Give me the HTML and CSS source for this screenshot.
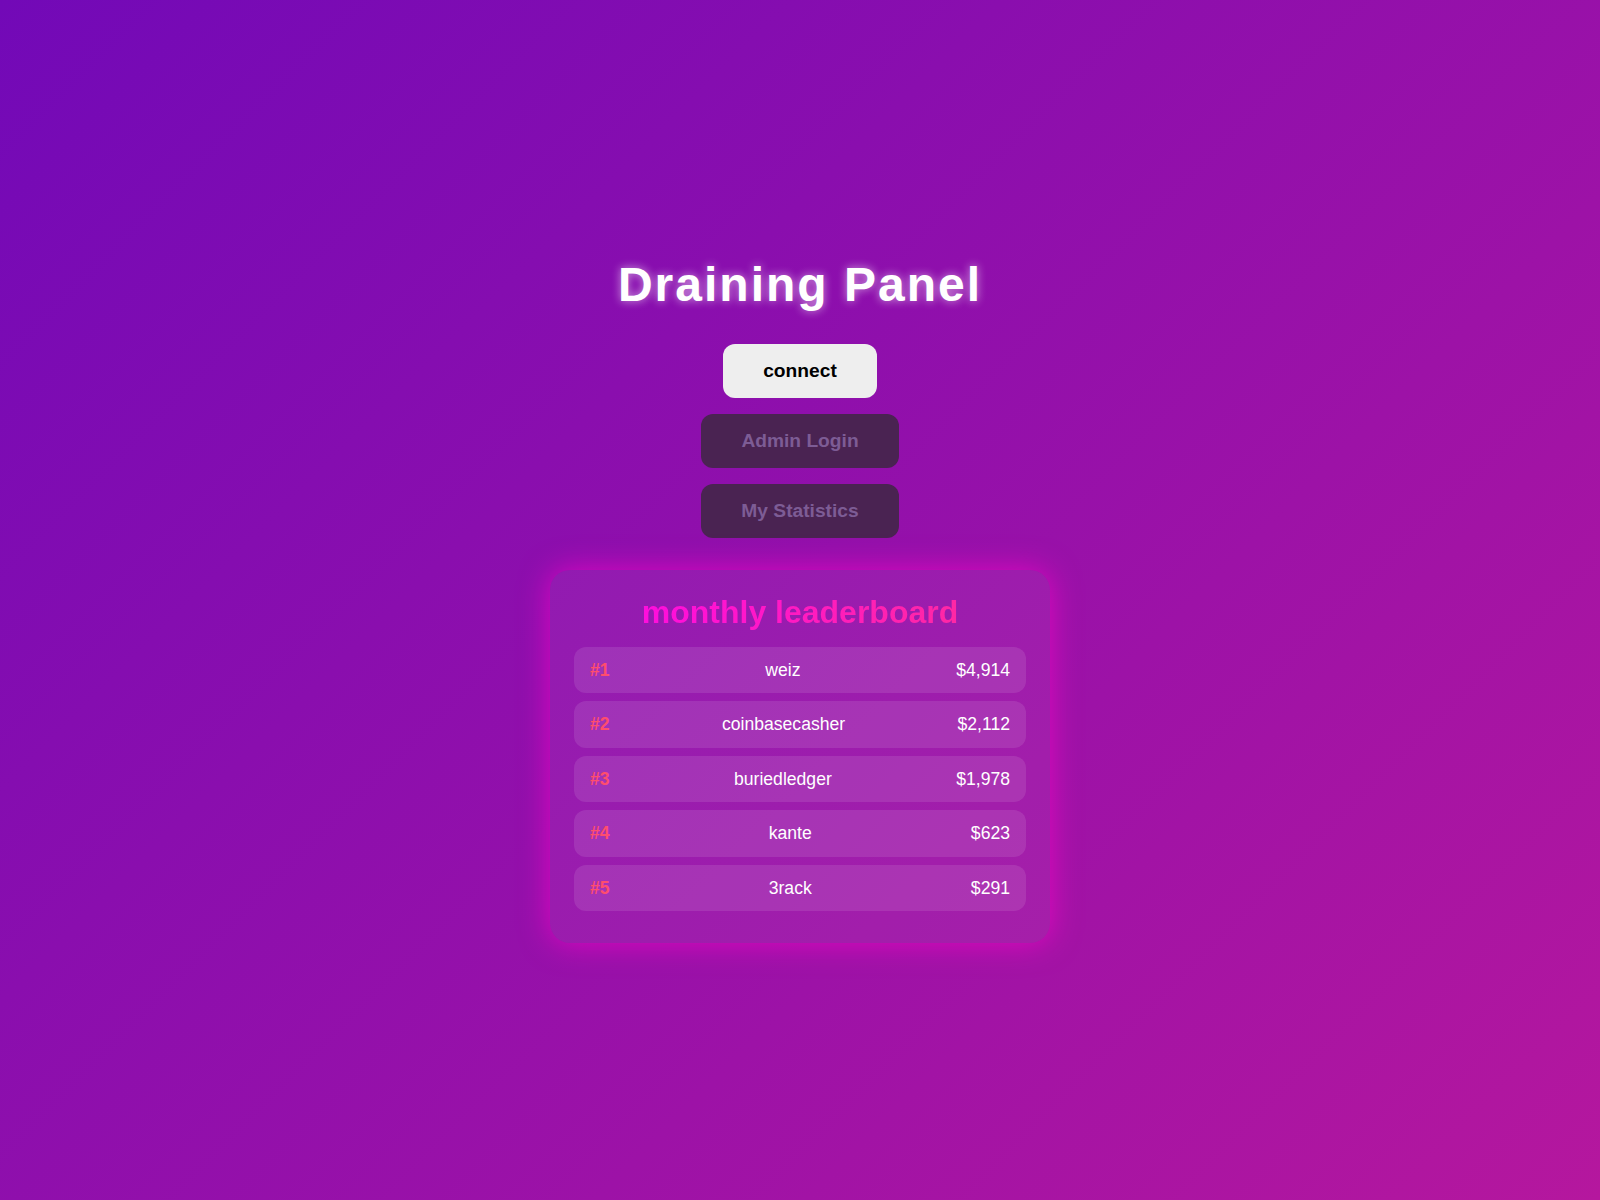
FILE: index.html
```html
<!DOCTYPE html>
<html lang="en">
<head>
<meta charset="utf-8">
<title>Draining Panel</title>
<link rel="stylesheet" href="styles.css">
</head>
<body>
<main class="page">
  <h1 class="title">Draining Panel</h1>
  <div class="actions">
    <button class="btn btn-primary">connect</button>
    <button class="btn btn-muted">Admin Login</button>
    <button class="btn btn-muted">My Statistics</button>
  </div>
  <section class="board">
    <h2 class="board-title">monthly leaderboard</h2>
    <ul class="rows">
      <li class="row"><span class="rank">#1</span><span class="name">weiz</span><span class="amount">$4,914</span></li>
      <li class="row"><span class="rank">#2</span><span class="name">coinbasecasher</span><span class="amount">$2,112</span></li>
      <li class="row"><span class="rank">#3</span><span class="name">buriedledger</span><span class="amount">$1,978</span></li>
      <li class="row"><span class="rank">#4</span><span class="name">kante</span><span class="amount">$623</span></li>
      <li class="row"><span class="rank">#5</span><span class="name">3rack</span><span class="amount">$291</span></li>
    </ul>
  </section>
</main>
</body>
</html>
```
FILE: styles.css
```css
html, body {
  margin: 0;
  padding: 0;
}
body {
  min-height: 100vh;
  background: linear-gradient(135deg, #7209b7, #b5179e);
  font-family: "Liberation Sans", Arial, sans-serif;
  color: #fff;
}
.page {
  min-height: 100vh;
  display: flex;
  flex-direction: column;
  align-items: center;
  justify-content: center;
}
.title {
  margin: 0 0 32px;
  font-size: 48px;
  font-weight: 700;
  letter-spacing: 2px;
  color: #fff;
  text-shadow: 0 0 10px rgba(255, 255, 255, 0.6);
}
.actions {
  display: flex;
  flex-direction: column;
  align-items: center;
  gap: 16px;
}
.btn {
  font-family: "Liberation Sans", Arial, sans-serif;
  font-size: 19.2px;
  font-weight: 700;
  padding: 16px 40px;
  border: none;
  border-radius: 12px;
  line-height: normal;
  cursor: pointer;
}
.btn-primary {
  background: #eeeeee;
  color: #000;
}
.btn-muted {
  background: #4a2352;
  color: #7d5c95;
}
.board {
  margin-top: 32px;
  width: 500px;
  box-sizing: border-box;
  padding: 24px 24px 32px;
  border-radius: 20px;
  background: rgba(255, 255, 255, 0.05);
  box-shadow: 0 0 30px rgba(255, 0, 204, 0.7);
}
.board-title {
  margin: 0 0 16px;
  text-align: center;
  font-size: 32px;
  font-weight: 700;
  background: linear-gradient(90deg, #ff08ea, #ff2d98);
  -webkit-background-clip: text;
  background-clip: text;
  color: transparent;
}
.rows {
  list-style: none;
  margin: 0;
  padding: 0;
  display: flex;
  flex-direction: column;
  gap: 8px;
}
.row {
  display: flex;
  justify-content: space-between;
  align-items: center;
  padding: 13px 16px;
  line-height: 20.5px;
  font-size: 17.6px;
  border-radius: 12px;
  background: rgba(255, 255, 255, 0.1);
}
.rank {
  font-weight: 700;
  color: #ff4d6d;
}
.name, .amount {
  color: #fff;
}
```
